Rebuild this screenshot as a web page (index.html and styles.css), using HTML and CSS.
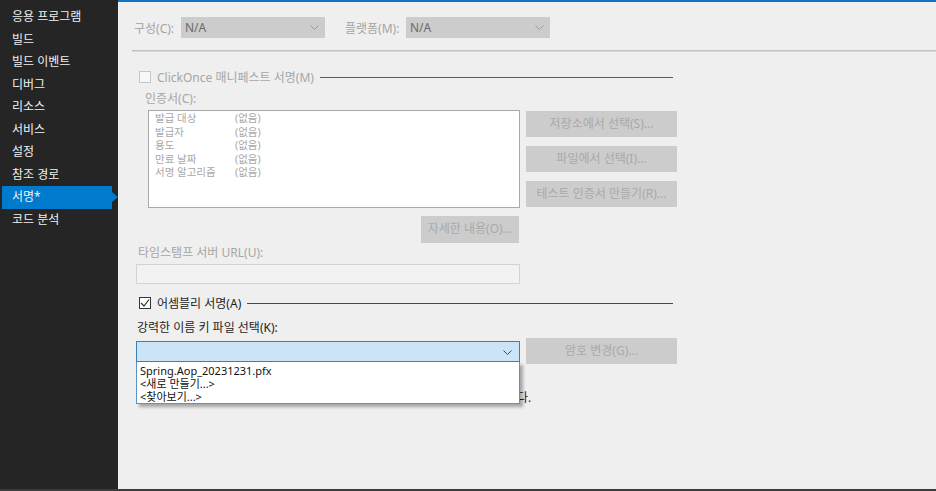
FILE: index.html
```html
<!DOCTYPE html>
<html lang="ko">
<head>
    <meta charset="UTF-8">
    <title>서명</title>
    <link rel="stylesheet" href="styles.css">
</head>
<body>
    <div class="app">
        <ul class="nav">
            <li>응용 프로그램</li>
            <li>빌드</li>
            <li>빌드 이벤트</li>
            <li>디버그</li>
            <li>리소스</li>
            <li>서비스</li>
            <li>설정</li>
            <li>참조 경로</li>
            <li class="active">서명*</li>
            <li>코드 분석</li>
        </ul>

        <div class="content">
            <div class="toolbar">
                <span class="tb-label">구성(C):</span>
                <div class="select">N/A
                    <svg class="chev" width="9" height="5" viewBox="0 0 9 5"><polyline points="0.5,0.5 4.5,4.5 8.5,0.5" fill="none" stroke="#9a9a9a" stroke-width="1"/></svg>
                </div>
                <span class="tb-label tb-label2">플랫폼(M):</span>
                <div class="select">N/A
                    <svg class="chev" width="9" height="5" viewBox="0 0 9 5"><polyline points="0.5,0.5 4.5,4.5 8.5,0.5" fill="none" stroke="#9a9a9a" stroke-width="1"/></svg>
                </div>
            </div>

            <div class="divider"></div>

            <div class="signing">
                <div class="check-row disabled">
                    <span class="box"></span>
                    <span class="check-text">ClickOnce 매니페스트 서명(M)</span>
                    <span class="rule"></span>
                </div>

                <div class="label disabled cert-label">인증서(C):</div>
                <div class="cert">
                    <div class="listbox">
                        <div class="li"><span class="k">발급 대상</span><span>(없음)</span></div>
                        <div class="li"><span class="k">발급자</span><span>(없음)</span></div>
                        <div class="li"><span class="k">용도</span><span>(없음)</span></div>
                        <div class="li"><span class="k">만료 날짜</span><span>(없음)</span></div>
                        <div class="li"><span class="k">서명 알고리즘</span><span>(없음)</span></div>
                    </div>
                    <div class="btn-stack">
                        <div class="btn">저장소에서 선택(S)...</div>
                        <div class="btn">파일에서 선택(I)...</div>
                        <div class="btn">테스트 인증서 만들기(R)...</div>
                    </div>
                    <div class="btn details">자세한 내용(O)...</div>
                </div>

                <div class="label disabled ts-label">타임스탬프 서버 URL(U):</div>
                <div class="textbox"></div>

                <div class="check-row asm-row">
                    <span class="box checked">
                        <svg width="10" height="10" viewBox="0 0 10 10"><polyline points="1,5 4,8 9,1.5" fill="none" stroke="#333" stroke-width="1.2"/></svg>
                    </span>
                    <span class="check-text">어셈블리 서명(A)</span>
                    <span class="rule"></span>
                </div>

                <div class="label key-label">강력한 이름 키 파일 선택(K):</div>
                <div class="key-row">
                    <div class="combo-wrap">
                        <div class="combo">
                            <svg class="chev" width="9" height="5" viewBox="0 0 9 5"><polyline points="0.5,0.5 4.5,4.5 8.5,0.5" fill="none" stroke="#444" stroke-width="1"/></svg>
                        </div>
                        <ul class="dropdown">
                            <li>Spring.Aop_20231231.pfx</li>
                            <li>&lt;새로 만들기...&gt;</li>
                            <li>&lt;찾아보기...&gt;</li>
                        </ul>
                    </div>
                    <div class="btn">암호 변경(G)...</div>
                </div>

                <div class="note">다.</div>
            </div>
        </div>
    </div>
</body>
</html>
```

FILE: styles.css
```css
* { box-sizing: border-box; }
body { margin: 0; font-family: "Noto Sans", "Noto Sans CJK KR", sans-serif; font-size: 12px; overflow: hidden; }
ul { margin: 0; padding: 0; list-style: none; }

.app { display: flex; height: 491px; border-bottom: 2px solid #3c3c3c; }

.nav { width: 118px; background: #252526; color: #f1f1f1; padding-top: 6px; }
.nav li { height: 22.5px; line-height: 22px; padding-left: 12px; position: relative; }
.nav li.active { background: #007acc; margin-left: 2px; width: 110px; padding-left: 10px; }
.nav li.active::after { content: ""; position: absolute; right: -6px; top: 6px; border-left: 6px solid #007acc; border-top: 5px solid transparent; border-bottom: 5px solid transparent; }

.content { flex: 1; background: #efefef; border-top: 2px solid #1173c5; padding-top: 15px; }

.toolbar { display: flex; align-items: center; height: 21px; margin-left: 16px; color: #a4a4a4; }
.tb-label { width: 47px; }
.tb-label2 { width: 61px; margin-left: 20px; }
.select { width: 144px; height: 21px; background: #cccccc; color: #6a6a6a; padding-left: 4px; line-height: 21px; position: relative; }
.chev { position: absolute; right: 6px; top: 8px; }

.divider { margin: 12px 0 0 14px; border-top: 1px solid #c2c2c2; border-bottom: 1px solid #d6d6d6; }

.signing { margin-left: 21px; width: 538px; }
.disabled { color: #a6a6a6; }

.check-row { display: flex; align-items: center; height: 14px; }
.check-row.disabled { margin-top: 18px; }
.box { width: 12px; height: 12px; border: 1px solid #333; background: #fff; display: flex; align-items: center; justify-content: center; }
.disabled .box { border-color: #c6c6c6; background: #f7f7f7; }
.check-text { margin-left: 6px; }
.rule { flex: 1; border-top: 1px solid #4a4a4a; margin: 1px 4px 0 6px; }
.disabled .rule { border-color: #5c5c5c; }

.label { height: 14px; line-height: 14px; }
.cert-label { margin-top: 8px; margin-left: 6px; }

.cert { display: grid; grid-template-columns: 372px 151px; column-gap: 6px; margin: 4px 0 0 9px; }
.listbox { height: 98px; background: #fff; border: 1px solid #a9a9a9; padding: 1px 0 0 6px; color: #a8a8a8; font-size: 10.5px; }
.li { display: flex; height: 13.5px; line-height: 13.5px; }
.li .k { width: 80px; }
.btn-stack { display: flex; flex-direction: column; gap: 9px; margin-top: 1px; }
.btn { height: 26px; line-height: 26px; background: #cccccc; color: #a9a9a9; text-align: center; }
.details { grid-column: 1; justify-self: end; width: 98px; height: 27px; margin-top: 8px; margin-right: 1px; }

.ts-label { margin: 3px 0 0 -1px; }
.textbox { width: 384px; height: 20px; margin: 4px 0 0 -3px; background: #f2f2f2; border: 1px solid #d3d3d3; }

.asm-row { margin-top: 12px; color: #1e1e1e; }
.key-label { margin: 11px 0 0 -2px; color: #1e1e1e; }

.key-row { display: flex; align-items: center; gap: 6px; margin: 3px 0 0 -3px; }
.key-row .btn { width: 151px; }
.combo-wrap { position: relative; width: 384px; }
.combo { height: 21px; background: #cce4f7; border: 1px solid #3c7fb1; position: relative; }
.combo .chev { right: 7px; top: 8px; }
.dropdown { position: absolute; left: 0; top: 21px; width: 384px; height: 42px; background: #fff; border: 1px solid #5694c9; border-top: none; padding: 2px 0 0 3px; color: #111; font-size: 11px; box-shadow: 3px 3px 3px rgba(0, 0, 0, 0.3); z-index: 2; }
.dropdown li { height: 13.3px; line-height: 13px; }

.note { margin: 27px 0 0 378px; color: #1e1e1e; line-height: 14px; }
```
